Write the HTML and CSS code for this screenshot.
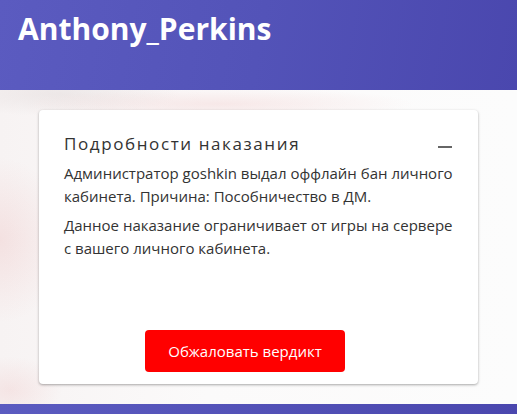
FILE: index.html
```html
<!DOCTYPE html>
<html lang="ru">
<head>
<meta charset="utf-8">
<link rel="stylesheet" href="styles.css">
</head>
<body>
<header class="header">
  <h1 class="header-title">Anthony_Perkins</h1>
</header>
<main class="content">
  <section class="card">
    <div class="card-head">
      <h2 class="card-title">Подробности наказания</h2>
      <span class="collapse"></span>
    </div>
    <p class="card-text">Администратор goshkin выдал оффлайн бан личного кабинета. Причина: Пособничество в ДМ.</p>
    <p class="card-text">Данное наказание ограничивает от игры на сервере с вашего личного кабинета.</p>
    <div class="card-actions">
      <button class="btn-appeal">Обжаловать вердикт</button>
    </div>
  </section>
</main>
<footer class="footer"></footer>
</body>
</html>
```
FILE: styles.css
```css
* { box-sizing: border-box; }
html, body { margin: 0; padding: 0; }
body {
  width: 517px;
  height: 414px;
  overflow: hidden;
  font-family: "Open Sans", "Liberation Sans", sans-serif;
  background: #fff;
}
.header {
  height: 90px;
  background: linear-gradient(100deg, #5b5bc0 0%, #5353b8 50%, #4a47ae 100%);
  padding: 9px 18px 0;
}
.header-title {
  margin: 0;
  color: #fff;
  font-size: 30px;
  font-weight: 700;
  line-height: 40px;
}
.content {
  height: 314px;
  padding: 20px 39px 0;
  background:
    radial-gradient(ellipse 90px 110px at 0px 150px, rgba(232,160,160,0.22), transparent 75%),
    radial-gradient(ellipse 70px 45px at 10px 300px, rgba(232,160,160,0.18), transparent 75%),
    radial-gradient(ellipse 260px 22px at 220px 14px, rgba(238,190,190,0.30), transparent 75%),
    radial-gradient(ellipse 160px 30px at 60px 4px, rgba(215,205,205,0.35), transparent 75%),
    linear-gradient(90deg, #f7f3f3 0%, #fbfafa 40%, #fcfcfc 100%);
}
.card {
  width: 439px;
  height: 274px;
  background: #fff;
  border-radius: 4px;
  box-shadow: 0 1px 3px rgba(0,0,0,0.25), 0 1px 2px rgba(0,0,0,0.1);
  padding: 22px 22px 0 25px;
  display: flex;
  flex-direction: column;
}
.card-head {
  display: flex;
  align-items: center;
  justify-content: space-between;
  margin-bottom: 6px;
}
.card-title {
  margin: 0;
  font-size: 17px;
  font-weight: 400;
  letter-spacing: 1.6px;
  color: #333;
  line-height: 24px;
}
.collapse {
  width: 14px;
  height: 2px;
  margin-right: 4px;
  margin-top: 6px;
  background: #666;
}
.card-text {
  margin: 0 0 6px;
  font-size: 15px;
  line-height: 23px;
  color: #333;
}
.card-actions {
  margin-top: auto;
  padding-bottom: 12px;
  padding-left: 81px;
}
.btn-appeal {
  width: 200px;
  height: 42px;
  border: none;
  border-radius: 4px;
  background: #ff0000;
  color: #fff;
  font-family: "Open Sans", "Liberation Sans", sans-serif;
  font-size: 15px;
}
.footer {
  height: 10px;
  background: linear-gradient(100deg, #5b5bc0 0%, #4a47ae 100%);
}
```
